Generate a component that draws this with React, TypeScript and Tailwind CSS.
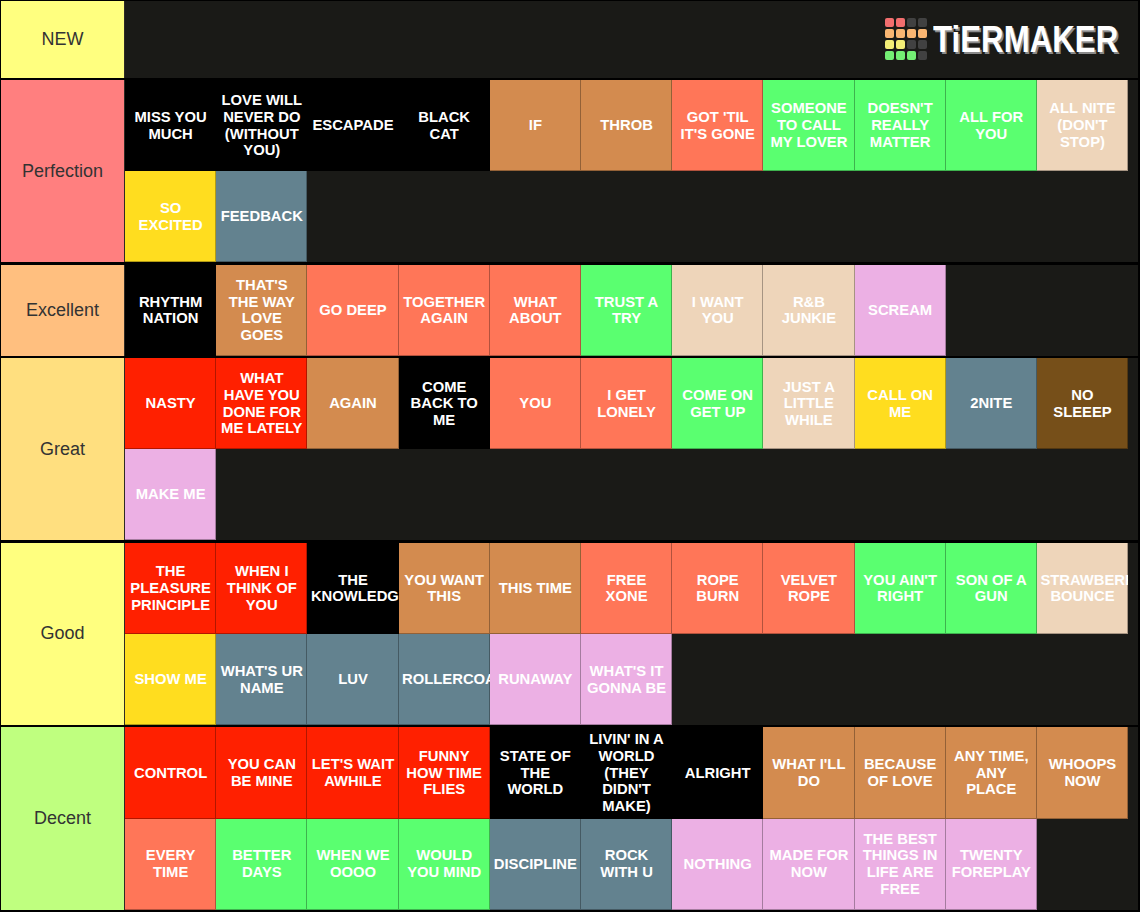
type Item = { t: string; c: string };

const BG: Record<string, string> = {
  k: "bg-black",
  tan: "bg-[#d38b4f]",
  sal: "bg-[#ff7658]",
  grn: "bg-[#5aff70]",
  bei: "bg-[#eed5ba]",
  yel: "bg-[#ffdd1f]",
  sla: "bg-[#63828f]",
  pnk: "bg-[#ecb0e4]",
  red: "bg-[#ff2000]",
  brn: "bg-[#764f19]",
};

const tiers: { name: string; bg: string; h: string; items: Item[] }[] = [
  {
    name: "Perfection",
    bg: "bg-[#ff7f7f]",
    h: "h-[182.4px]",
    items: [
      { t: "MISS YOU|MUCH", c: "k" },
      { t: "LOVE WILL|NEVER DO|(WITHOUT|YOU)", c: "k" },
      { t: "ESCAPADE", c: "k" },
      { t: "BLACK|CAT", c: "k" },
      { t: "IF", c: "tan" },
      { t: "THROB", c: "tan" },
      { t: "GOT 'TIL|IT'S GONE", c: "sal" },
      { t: "SOMEONE|TO CALL|MY LOVER", c: "grn" },
      { t: "DOESN'T|REALLY|MATTER", c: "grn" },
      { t: "ALL FOR|YOU", c: "grn" },
      { t: "ALL NITE|(DON'T|STOP)", c: "bei" },
      { t: "SO|EXCITED", c: "yel" },
      { t: "FEEDBACK", c: "sla" },
    ],
  },
  {
    name: "Excellent",
    bg: "bg-[#ffbf7f]",
    h: "h-[91.2px]",
    items: [
      { t: "RHYTHM|NATION", c: "k" },
      { t: "THAT'S|THE WAY|LOVE|GOES", c: "tan" },
      { t: "GO DEEP", c: "sal" },
      { t: "TOGETHER|AGAIN", c: "sal" },
      { t: "WHAT|ABOUT", c: "sal" },
      { t: "TRUST A|TRY", c: "grn" },
      { t: "I WANT|YOU", c: "bei" },
      { t: "R&B|JUNKIE", c: "bei" },
      { t: "SCREAM", c: "pnk" },
    ],
  },
  {
    name: "Great",
    bg: "bg-[#ffdf7f]",
    h: "h-[182.4px]",
    items: [
      { t: "NASTY", c: "red" },
      { t: "WHAT|HAVE YOU|DONE FOR|ME LATELY", c: "red" },
      { t: "AGAIN", c: "tan" },
      { t: "COME|BACK TO|ME", c: "k" },
      { t: "YOU", c: "sal" },
      { t: "I GET|LONELY", c: "sal" },
      { t: "COME ON|GET UP", c: "grn" },
      { t: "JUST A|LITTLE|WHILE", c: "bei" },
      { t: "CALL ON|ME", c: "yel" },
      { t: "2NITE", c: "sla" },
      { t: "NO|SLEEEP", c: "brn" },
      { t: "MAKE ME", c: "pnk" },
    ],
  },
  {
    name: "Good",
    bg: "bg-[#ffff7f]",
    h: "h-[182.4px]",
    items: [
      { t: "THE|PLEASURE|PRINCIPLE", c: "red" },
      { t: "WHEN I|THINK OF|YOU", c: "red" },
      { t: "THE|KNOWLEDGE", c: "k" },
      { t: "YOU WANT|THIS", c: "tan" },
      { t: "THIS TIME", c: "tan" },
      { t: "FREE|XONE", c: "sal" },
      { t: "ROPE|BURN", c: "sal" },
      { t: "VELVET|ROPE", c: "sal" },
      { t: "YOU AIN'T|RIGHT", c: "grn" },
      { t: "SON OF A|GUN", c: "grn" },
      { t: "STRAWBERRY|BOUNCE", c: "bei" },
      { t: "SHOW ME", c: "yel" },
      { t: "WHAT'S UR|NAME", c: "sla" },
      { t: "LUV", c: "sla" },
      { t: "ROLLERCOASTER", c: "sla" },
      { t: "RUNAWAY", c: "pnk" },
      { t: "WHAT'S IT|GONNA BE", c: "pnk" },
    ],
  },
  {
    name: "Decent",
    bg: "bg-[#bfff7f]",
    h: "h-[182.4px]",
    items: [
      { t: "CONTROL", c: "red" },
      { t: "YOU CAN|BE MINE", c: "red" },
      { t: "LET'S WAIT|AWHILE", c: "red" },
      { t: "FUNNY|HOW TIME|FLIES", c: "red" },
      { t: "STATE OF|THE|WORLD", c: "k" },
      { t: "LIVIN' IN A|WORLD|(THEY|DIDN'T|MAKE)", c: "k" },
      { t: "ALRIGHT", c: "k" },
      { t: "WHAT I'LL|DO", c: "tan" },
      { t: "BECAUSE|OF LOVE", c: "tan" },
      { t: "ANY TIME,|ANY|PLACE", c: "tan" },
      { t: "WHOOPS|NOW", c: "tan" },
      { t: "EVERY|TIME", c: "sal" },
      { t: "BETTER|DAYS", c: "grn" },
      { t: "WHEN WE|OOOO", c: "grn" },
      { t: "WOULD|YOU MIND", c: "grn" },
      { t: "DISCIPLINE", c: "sla" },
      { t: "ROCK|WITH U", c: "sla" },
      { t: "NOTHING", c: "pnk" },
      { t: "MADE FOR|NOW", c: "pnk" },
      { t: "THE BEST|THINGS IN|LIFE ARE|FREE", c: "pnk" },
      { t: "TWENTY|FOREPLAY", c: "pnk" },
    ],
  },
];

const logoCells = [
  "bg-[#f26e6e]", "bg-[#f26e6e]", "bg-[#414141]", "bg-[#414141]",
  "bg-[#fab672]", "bg-[#fab672]", "bg-[#fab672]", "bg-[#fab672]",
  "bg-[#f3ee76]", "bg-[#f3ee76]", "bg-[#414141]", "bg-[#414141]",
  "bg-[#74ef74]", "bg-[#74ef74]", "bg-[#74ef74]", "bg-[#414141]",
];

const Label = ({ name, bg }: { name: string; bg: string }) => (
  <div
    className={`${bg} w-[124px] shrink-0 border-r border-[#2e2a25] flex items-center justify-center text-[18px] text-[#333]`}
  >
    {name}
  </div>
);

const Tile = ({ item }: { item: Item }) => (
  <div
    className={`${BG[item.c]} w-[91.2px] h-[91.2px] px-[3.5px] overflow-hidden flex flex-col justify-center shadow-[inset_-1px_-1px_0_rgba(0,0,0,0.3)] text-white font-bold text-[14.8px] leading-[16.7px]`}
  >
    {item.t.split("|").map((line, i) => (
      <div key={i} className="text-center whitespace-nowrap">
        {line}
      </div>
    ))}
  </div>
);

const App = () => {
  return (
    <div className="w-[1140px] h-[912px] overflow-hidden bg-black pt-px pl-px pr-[2px] flex flex-col gap-[2.28px] font-['Liberation_Sans',Arial,sans-serif]">
      <div className="h-[76.7px] shrink-0 flex">
        <Label name="NEW" bg="bg-[#ffff7f]" />
        <div className="flex-1 bg-[#1a1a17] flex items-center justify-end pr-[18px] gap-[6px]">
          <div className="grid grid-cols-4 gap-[2px]">
            {logoCells.map((c, i) => (
              <div key={i} className={`${c} w-[9px] h-[9px] rounded-[2px]`} />
            ))}
          </div>
          <div className="w-[187px] h-[37px] flex items-center">
            <span className="origin-left scale-x-[0.845] whitespace-nowrap text-[37px] leading-none font-bold text-white [text-shadow:2px_2px_0_#8a8a8a]">
              TiERMAKER
            </span>
          </div>
        </div>
      </div>
      {tiers.map((tier) => (
        <div key={tier.name} className={`${tier.h} shrink-0 flex`}>
          <Label name={tier.name} bg={tier.bg} />
          <div className="flex-1 bg-[#1a1a17] flex flex-wrap content-start">
            {tier.items.map((it) => (
              <Tile key={it.t} item={it} />
            ))}
          </div>
        </div>
      ))}
    </div>
  );
};

export default App;
